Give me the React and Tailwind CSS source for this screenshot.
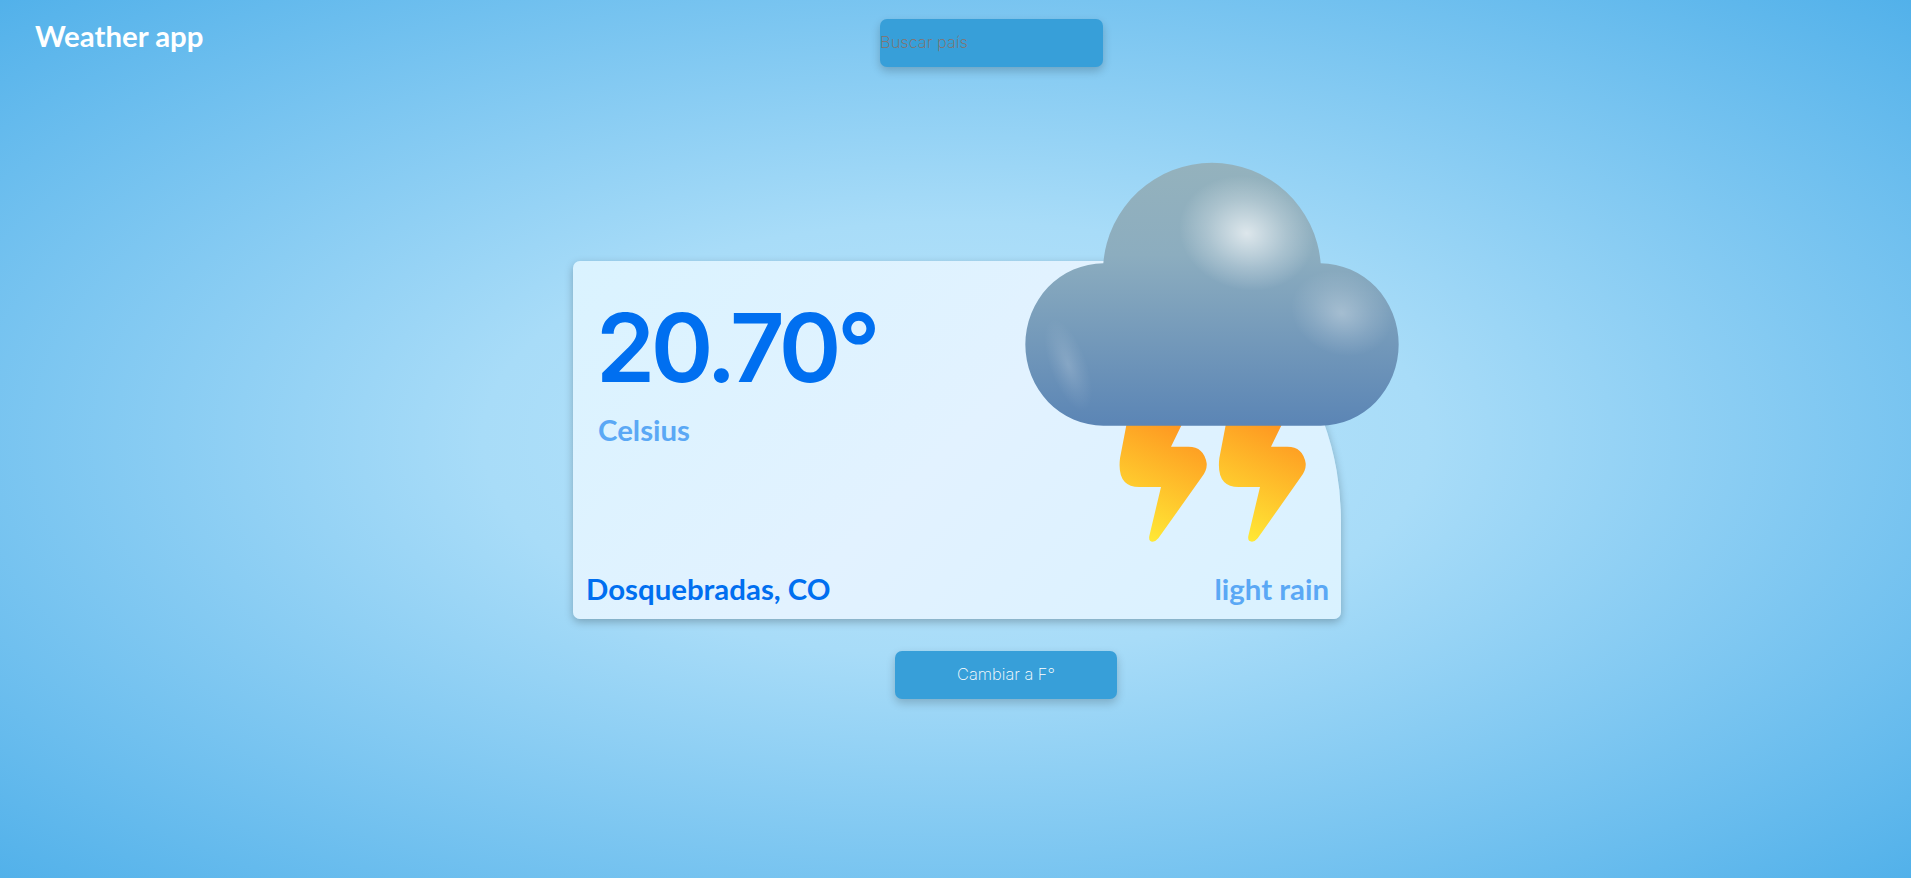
function StormCloud({ className }) {
  // viewBox is 3x the on-screen size
  return (
    <svg viewBox="0 0 1350 1260" className={className}>
      <defs>
        <linearGradient id="cloudFill" x1="0" y1="0" x2="0" y2="1">
          <stop offset="0" stopColor="#94b2bd" />
          <stop offset="0.35" stopColor="#8cadbf" />
          <stop offset="1" stopColor="#5b85b5" />
        </linearGradient>
        <linearGradient id="boltFill" x1="0.72" y1="0" x2="0.38" y2="1">
          <stop offset="0" stopColor="#fe9320" />
          <stop offset="1" stopColor="#ffe835" />
        </linearGradient>
        <radialGradient id="glow">
          <stop offset="0" stopColor="#fff" stopOpacity="0.7" />
          <stop offset="0.6" stopColor="#fff" stopOpacity="0.25" />
          <stop offset="1" stopColor="#fff" stopOpacity="0" />
        </radialGradient>
        <clipPath id="cloudClip">
          <path d="M370 370A327 327 0 0 1 1022 370A234 243.5 0 0 1 1022 857L370 857A234 243.5 0 0 1 370 370Z" />
        </clipPath>
      </defs>
      <path
        fill="url(#boltFill)"
        d="M442 840L420 955Q410 1041 478 1041L543 1041L508 1188Q505 1205 518 1205Q527 1205 535 1195L665 1012Q682 990 680 970Q672 920 625 920L573 920L612 840Z"
      />
      <path
        fill="url(#boltFill)"
        d="M740 840L718 955Q708 1041 776 1041L840 1041L805 1188Q802 1205 816 1205Q825 1205 833 1195L962 1012Q979 990 977 970Q969 920 922 920L873 920L912 840Z"
      />
      <path
        fill="url(#cloudFill)"
        d="M370 370A327 327 0 0 1 1022 370A234 243.5 0 0 1 1022 857L370 857A234 243.5 0 0 1 370 370Z"
      />
      <g clipPath="url(#cloudClip)">
        <ellipse cx="800" cy="280" rx="205" ry="170" fill="url(#glow)" transform="rotate(15 800 280)" />
        <ellipse cx="1085" cy="520" rx="155" ry="125" fill="url(#glow)" opacity="0.45" transform="rotate(20 1085 520)" />
        <ellipse cx="265" cy="675" rx="55" ry="145" fill="url(#glow)" opacity="0.25" transform="rotate(-20 265 675)" />
      </g>
    </svg>
  );
}

export default function App() {
  return (
    <div className="h-[878px] overflow-hidden bg-[radial-gradient(ellipse_at_center,#bbe5fb_0%,#a8dcf8_35%,#52b1ea_100%)] font-['Lato',sans-serif]">
      <header className="flex items-start pt-[19px] pl-[35px]">
        <h1 className="w-[845px] mt-[-1px] text-[29.4px] leading-9 font-bold text-white">Weather app</h1>
        <input
          type="text"
          placeholder="Buscar país"
          className="w-[223px] h-12 pb-[2px] rounded-[7px] bg-[#379fd9] shadow-[0_4px_10px_rgba(0,0,0,0.2)] font-['Inter',sans-serif] font-[250] text-[16.5px] outline-none placeholder:text-[#8a6f66]"
        />
      </header>

      <main className="flex flex-col items-start pl-[573px]">
        <section className="relative flex flex-col w-[768px] h-[358px] mt-[194px] pt-[29px] rounded-[7px] rounded-tr-[230px_260px] bg-[linear-gradient(135deg,#daf3ff,#e2f2ff_50%,#d9f2ff)] shadow-[0_3px_8px_rgba(0,0,0,0.25)]">
          <p className="pl-[23px] font-['Inter',sans-serif] text-[95px] leading-[115px] font-semibold tracking-[-4.5px] text-[#006ff0]">20.70°</p>
          <p className="mt-[7px] pl-[25px] text-[29.4px] leading-9 font-bold text-[#5aa8f5]">Celsius</p>
          <div className="flex justify-between items-center mt-auto pb-[12px] pl-[13px] pr-[12px]">
            <span className="text-[29.4px] leading-9 font-bold text-[#006ff0]">Dosquebradas, CO</span>
            <span className="text-[29.4px] leading-9 font-bold text-[#5aa8f5]">light rain</span>
          </div>
          <StormCloud className="absolute left-[407px] top-[-121px] w-[450px] h-[420px]" />
        </section>

        <button className="w-[222px] h-12 mt-[32px] ml-[322px] pb-[1px] rounded-[7px] bg-[#379fd9] shadow-[0_4px_10px_rgba(0,0,0,0.2)] font-['Inter',sans-serif] font-[250] text-[16.4px] text-white">
          Cambiar a F°
        </button>
      </main>
    </div>
  );
}
